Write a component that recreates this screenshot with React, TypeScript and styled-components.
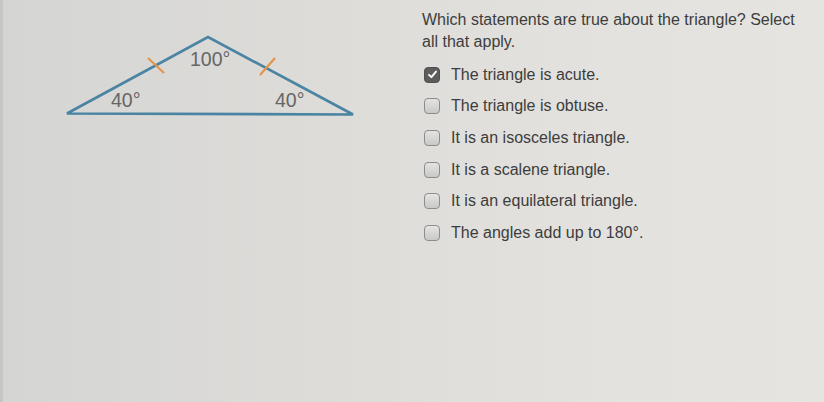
import styled, { createGlobalStyle } from "styled-components";

const options = [
  { label: "The triangle is acute.", checked: true },
  { label: "The triangle is obtuse.", checked: false },
  { label: "It is an isosceles triangle.", checked: false },
  { label: "It is a scalene triangle.", checked: false },
  { label: "It is an equilateral triangle.", checked: false },
  { label: "The angles add up to 180°.", checked: false },
];

const GlobalStyle = createGlobalStyle`
  html, body {
    margin: 0;
    padding: 0;
  }
  body {
    font-family: "Liberation Sans", Arial, sans-serif;
    background: #dcdcda;
  }
`;

const Page = styled.div`
  width: 824px;
  height: 402px;
  display: flex;
  background: linear-gradient(90deg, #d5d5d3 0%, #dddcd9 40%, #e3e2de 75%, #e5e4e0 100%);
  box-shadow: inset 3px 0 0 #c6c6c6;
  overflow: hidden;
`;

const FigurePanel = styled.div`
  width: 422px;
  flex: none;
`;

const QuestionPanel = styled.div`
  flex: 1;
  padding: 9px 20px 0 0;
`;

const Prompt = styled.p`
  margin: 0 0 6px 0;
  font-size: 16px;
  line-height: 22px;
  color: #3d3d3d;
`;

const OptionList = styled.ul`
  list-style: none;
  margin: 0;
  padding: 0;
`;

const OptionRow = styled.li`
  display: flex;
  align-items: center;
  height: 31.6px;
  font-size: 16px;
  color: #3d3d3d;
`;

const Box = styled.span<{ $checked: boolean }>`
  width: 16px;
  height: 16px;
  box-sizing: border-box;
  margin: 0 11px 0 2px;
  border-radius: 4px;
  display: flex;
  align-items: center;
  justify-content: center;
  border: 1px solid ${(p) => (p.$checked ? "#4f4f4f" : "#8c8c8c")};
  background: ${(p) =>
    p.$checked ? "#5c5c5c" : "linear-gradient(180deg, #e4e4e2 0%, #c9c9c7 100%)"};
`;

const Triangle = () => (
  <svg width="422" height="140" viewBox="0 0 422 140">
    <polygon
      points="67,113.5 208,37 353,114.5"
      fill="none"
      stroke="#4a84a2"
      strokeWidth="2.6"
      strokeLinejoin="miter"
    />
    <line x1="148" y1="58" x2="164" y2="73" stroke="#e4944a" strokeWidth="2.2" />
    <line x1="260" y1="75" x2="275" y2="58" stroke="#e4944a" strokeWidth="2.2" />
    <g fontFamily="Liberation Sans, Arial, sans-serif" fontSize="19.5" fill="#666666">
      <text x="190" y="66">100°</text>
      <text x="111" y="107">40°</text>
      <text x="275" y="107">40°</text>
    </g>
  </svg>
);

export default function App() {
  return (
    <>
      <GlobalStyle />
      <Page>
        <FigurePanel>
          <Triangle />
        </FigurePanel>
        <QuestionPanel>
          <Prompt>
            Which statements are true about the triangle? Select all that apply.
          </Prompt>
          <OptionList>
            {options.map((o) => (
              <OptionRow key={o.label}>
                <Box $checked={o.checked}>
                  {o.checked && (
                    <svg width="11" height="11" viewBox="0 0 11 11">
                      <path
                        d="M2 5.8 L4.4 8.2 L9 2.6"
                        fill="none"
                        stroke="#ffffff"
                        strokeWidth="1.9"
                        strokeLinecap="round"
                        strokeLinejoin="round"
                      />
                    </svg>
                  )}
                </Box>
                {o.label}
              </OptionRow>
            ))}
          </OptionList>
        </QuestionPanel>
      </Page>
    </>
  );
}
